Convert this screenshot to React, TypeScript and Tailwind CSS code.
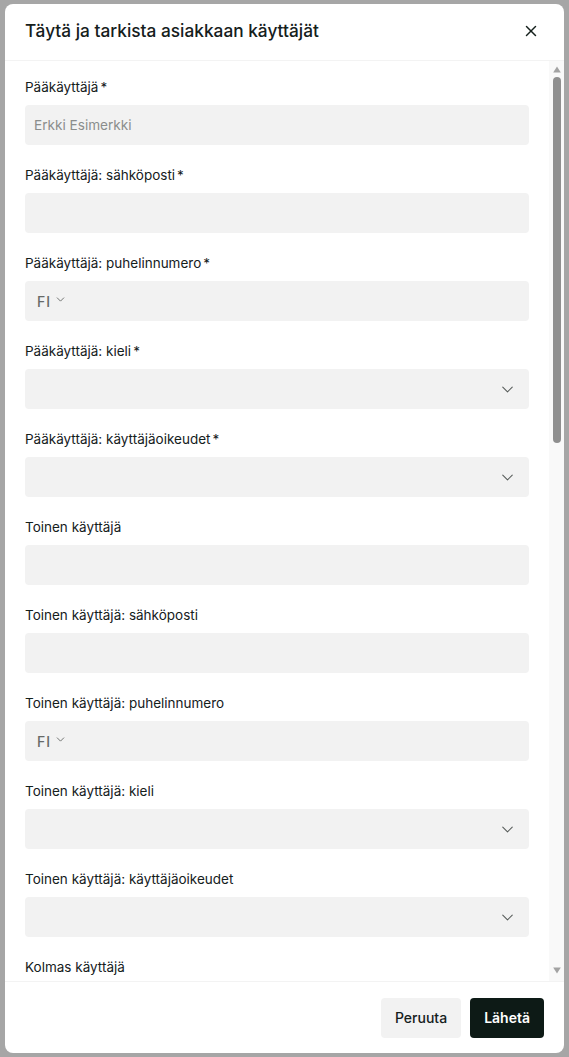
import React from "react";
import { ChevronDown, X } from "lucide-react";

type Field = { label: string; kind: "text" | "phone" | "select"; placeholder?: string };

function fieldsFor(name: string, req: boolean, first: boolean): Field[] {
  const s = req ? " *" : "";
  return [
    { label: name + s, kind: "text", placeholder: first ? "Erkki Esimerkki" : "" },
    { label: name + ": sähköposti" + s, kind: "text" },
    { label: name + ": puhelinnumero" + s, kind: "phone" },
    { label: name + ": kieli" + s, kind: "select" },
    { label: name + ": käyttäjäoikeudet" + s, kind: "select" },
  ];
}

function Label({ text }: { text: string }) {
  const star = text.endsWith(" *");
  const base = star ? text.slice(0, -2) : text;
  return (
    <div className="text-[13.5px] leading-5 text-[#15201c]">
      {base}
      {star && <span className="ml-[2px]">*</span>}
    </div>
  );
}

function Input({ f }: { f: Field }) {
  if (f.kind === "phone") {
    return (
      <div className="h-10 rounded-[4px] bg-[#f2f2f2] flex items-center pl-3">
        <span className="text-[14px] font-medium text-[#666a68] tracking-[1px]">FI</span>
        <ChevronDown size={13} strokeWidth={1.7} className="ml-[3px] text-[#666a68] -mt-[3px]" />
      </div>
    );
  }
  if (f.kind === "select") {
    return (
      <div className="h-10 rounded-[4px] bg-[#f2f2f2] flex items-center justify-end pr-[12px]">
        <ChevronDown size={19} strokeWidth={1.3} className="text-[#555a58]" />
      </div>
    );
  }
  return (
    <div className="h-10 rounded-[4px] bg-[#f2f2f2] flex items-center pl-[9px]">
      <span className="text-[13.6px] text-[#8a8d8c]">{f.placeholder}</span>
    </div>
  );
}

export default function App() {
  const fields: Field[] = [
    ...fieldsFor("Pääkäyttäjä", true, true),
    ...fieldsFor("Toinen käyttäjä", false, false),
  ];
  return (
    <div
      className="relative w-[569px] h-[1057px] overflow-hidden bg-white"
      style={{ fontFamily: 'Inter, "Noto Sans", sans-serif' }}
    >
      <div className="absolute inset-0 bg-[#a6a6a6]" />
      <div className="absolute left-[5px] top-[4px] w-[559px] h-[1049px] bg-white rounded-[8px] flex flex-col overflow-hidden">
        <div className="h-[57px] shrink-0 flex items-center justify-between pl-5 pr-[24px] border-b border-[#f3f3f3]">
          <h2 className="text-[17.3px] font-medium text-[#15201c] -mt-[2px]">Täytä ja tarkista asiakkaan käyttäjät</h2>
          <X size={18} strokeWidth={2} className="text-[#15201c] -mt-[2px]" />
        </div>
        <div className="flex-1 flex min-h-0">
          <div className="flex-1 overflow-hidden">
            <div className="px-5 pt-4 pb-5 flex flex-col gap-5">
              {fields.map((f, i) => (
                <div key={i} className="flex flex-col gap-2">
                  <Label text={f.label} />
                  <Input f={f} />
                </div>
              ))}
              <Label text="Kolmas käyttäjä" />
            </div>
          </div>
          <div className="w-[15px] shrink-0 bg-[#f9f9f9] flex flex-col items-center pt-[5px] pb-[7px]">
            <svg width="8" height="7" viewBox="0 0 8 7" className="shrink-0">
              <path d="M4 0.5 L7.8 6.5 L0.2 6.5 Z" fill="#a3a3a3" />
            </svg>
            <div className="mt-[4px] w-2 h-[366px] rounded-full bg-[#8f8f8f] shrink-0" />
            <div className="flex-1" />
            <svg width="8" height="7" viewBox="0 0 8 7" className="shrink-0">
              <path d="M4 6.5 L7.8 0.5 L0.2 0.5 Z" fill="#a3a3a3" />
            </svg>
          </div>
        </div>
        <div className="h-[72px] shrink-0 border-t border-[#f3f3f3] flex items-center justify-end gap-[9px] px-5">
          <button className="h-10 px-[14px] rounded-[4px] bg-[#f2f2f2] text-[14px] font-medium text-[#15201c]">Peruuta</button>
          <button className="h-10 px-[14px] rounded-[4px] bg-[#0d1a16] text-[14px] font-semibold text-white">Lähetä</button>
        </div>
      </div>
    </div>
  );
}
